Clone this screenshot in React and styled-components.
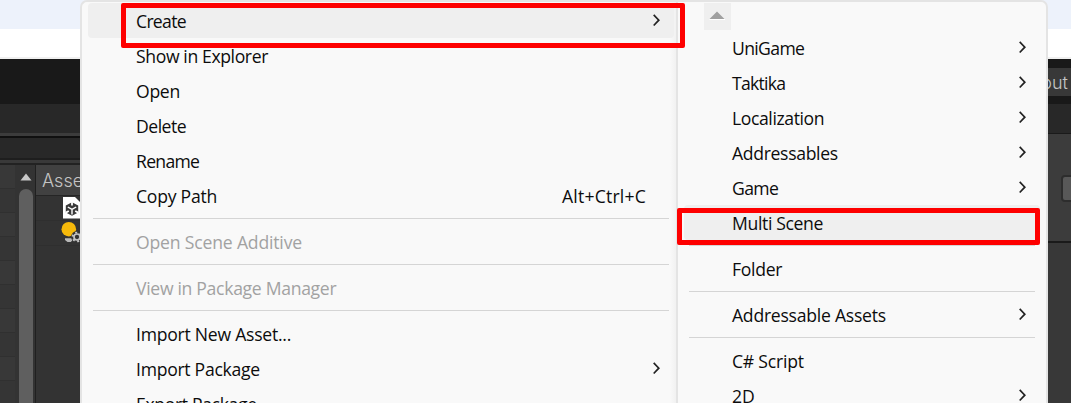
import React from "react";
import styled, { createGlobalStyle } from "styled-components";

const Global = createGlobalStyle`
  * { box-sizing: border-box; }
  body { margin: 0; overflow: hidden; }
`;

const Screen = styled.div`
  position: relative;
  display: flex;
  width: 1071px;
  height: 403px;
  overflow: hidden;
  background: #edf2fb;
  font-family: "Open Sans", "Noto Sans", sans-serif;
`;

/* ---- editor window behind the menus ---- */
const EditorSide = styled.div`
  width: ${(p) => p.$w}px;
  flex: none;
  display: flex;
  flex-direction: column;
  overflow: hidden;
`;
const Band = styled.div`
  flex: none;
  height: ${(p) => p.$h}px;
  background: ${(p) => p.$c};
`;
const Columns = styled.div`
  display: flex;
  flex: 1;
  min-height: 0;
`;
const Tree = styled.div`
  width: 15px;
  background: repeating-linear-gradient(#383838 0 23px, #303030 23px 24px, #353535 24px 47px, #303030 47px 48px);
`;
const Gutter = styled.div`
  width: 20px;
  padding: 8px 0 0 4px;
  background: #333;
  svg { display: block; }
`;
const ScrollThumb = styled.div`
  width: 14px;
  height: 240px;
  margin-top: 8px;
  border-radius: 7px;
  background: #5f5f5f;
`;
const AssetPane = styled.div`
  width: 45px;
  border-left: 1px solid #202020;
  background: #333;
  overflow: hidden;
`;
const AssetHeader = styled.div`
  height: 31px;
  padding-left: 6px;
  border-bottom: 1px solid #252525;
  background: #414141;
  color: #c4c4c4;
  font: 300 18px/31px Inter, sans-serif;
  white-space: nowrap;
`;
const AssetRow = styled.div`
  height: 25px;
  padding-left: 25px;
  border-bottom: 1px solid #2f2f2f;
  svg { display: block; }
`;
const EditorTab = styled.div`
  flex: none;
  height: 28px;
  background: #383838;
  color: #c4c4c4;
  display: flex;
  justify-content: flex-end;
  padding-right: 3px;
  font: 300 18px/29px Inter, sans-serif;
`;
const InspectorTop = styled.div`
  flex: none;
  height: 107px;
  padding: 41px 0 0 13px;
  background: #3c3c3c;
`;
const InspectorButton = styled.div`
  width: 30px;
  height: 27px;
  border: 2px solid #2d2d2d;
  border-radius: 4px;
  background: #585858;
`;

/* ---- menus ---- */
const Menu = styled.div`
  flex: none;
  width: ${(p) => p.$w}px;
  height: 420px;
  padding: 1px ${(p) => p.$right}px 0 6px;
  border: 2px solid #e4e4e4;
  border-right-width: ${(p) => (p.$joined ? 0 : 2)}px;
  border-radius: ${(p) => (p.$joined ? "7px 0 0 0" : "0 7px 0 0")};
  background: ${(p) =>
    p.$joined ? "linear-gradient(to left, #f1f1f1, #f9f9f9 6px)" : "#f9f9f9"};
`;
const Item = styled.div`
  display: flex;
  justify-content: space-between;
  height: 35px;
  padding: 0 ${(p) => p.$end || 14}px 0 48px;
  border-radius: 4px;
  background: ${(p) => (p.$active ? "#efefef" : "transparent")};
  color: ${(p) => (p.$disabled ? "#a2a2a2" : "#0c0c0c")};
  font-size: 17.6px;
  line-height: 37px;
  white-space: nowrap;
  svg { display: block; margin-top: 11px; flex: none; }
`;
const Label = styled.span`
  letter-spacing: ${(p) => p.$ls || 0}px;
`;
const Divider = styled.div`
  height: 1px;
  margin: 5px 5px;
  background: #d5d5d5;
`;
const ScrollUp = styled.div`
  display: flex;
  justify-content: center;
  width: 27px;
  height: 27px;
  margin-left: 20px;
  padding: 8px 2px 0 0;
  background: #efefef;
`;
const Highlight = styled.div`
  position: absolute;
  left: ${(p) => p.$x}px;
  top: ${(p) => p.$y}px;
  width: ${(p) => p.$w}px;
  height: ${(p) => p.$h}px;
  border: 5px solid #fe0000;
  border-radius: 2px;
`;

const Chevron = () => (
  <svg width="7" height="13" viewBox="0 0 7 13" fill="none" stroke="#222" strokeWidth="1.7">
    <path d="M0.7 0.9 L5.8 6.2 L0.7 11.5" />
  </svg>
);

const UnityAsset = () => (
  <svg width="24" height="24" viewBox="0 0 24 24">
    <path d="M2 1h12l6 6v15.5H2z" fill="#fff" />
    <path d="M11 6.3L17.2 9.6v6.8L11 19.8 4.8 16.4V9.6z" fill="#3a3a3a" />
    <path d="M11 6v3.4M4.8 16.6l3-1.6M17.2 16.6l-3-1.6" stroke="#fff" strokeWidth="1.8" />
    <path d="M11 13.4v5M11 13.4L6.8 11M11 13.4l4.2-2.4" stroke="#fff" strokeWidth="1.4" />
  </svg>
);

const BulbAsset = () => (
  <svg width="24" height="24" viewBox="0 0 24 24">
    <circle cx="7.8" cy="8.2" r="7.3" fill="#f6b90a" />
    <path d="M4 17.2h7v2l-1 1.8H6.5L4 19z" fill="#b8b8b8" />
    <circle cx="16" cy="16" r="5.9" fill="#333" />
    <g fill="none" stroke="#c4c4c4">
      <circle cx="16" cy="16" r="3" strokeWidth="1.7" />
      <circle cx="16" cy="16" r="4.4" strokeWidth="1.9" strokeDasharray="2 2.6" />
    </g>
  </svg>
);

const MAIN = [
  { t: "Create", ls: -0.7, sub: true, active: true },
  { t: "Show in Explorer", ls: -0.38 },
  { t: "Open", ls: -0.3 },
  { t: "Delete", ls: -0.5 },
  { t: "Rename", ls: -0.7 },
  { t: "Copy Path", ls: -0.25, key: "Alt+Ctrl+C" },
  null,
  { t: "Open Scene Additive", ls: -0.18, disabled: true },
  null,
  { t: "View in Package Manager", ls: -0.31, disabled: true },
  null,
  { t: "Import New Asset...", ls: -0.25 },
  { t: "Import Package", ls: -0.28, sub: true },
  { t: "Export Package...", ls: -0.35 },
];
const CREATE = [
  { t: "UniGame", ls: -0.65, sub: true },
  { t: "Taktika", ls: -0.75, sub: true },
  { t: "Localization", ls: -0.4, sub: true },
  { t: "Addressables", ls: -0.33, sub: true },
  { t: "Game", ls: -0.6, sub: true },
  { t: "Multi Scene", ls: -0.36, active: true },
  null,
  { t: "Folder", ls: -0.3 },
  null,
  { t: "Addressable Assets", ls: -0.25, sub: true },
  null,
  { t: "C# Script", ls: -0.22 },
  { t: "2D", sub: true },
];

const Items = ({ list }) =>
  list.map((m, i) =>
    m ? (
      <Item key={i} $active={m.active} $disabled={m.disabled} $end={m.key && 28}>
        <Label $ls={m.ls}>{m.t}</Label>
        {m.key && <Label $ls={0.2}>{m.key}</Label>}
        {m.sub && <Chevron />}
      </Item>
    ) : (
      <Divider key={i} />
    )
  );

export default function App() {
  return (
    <Screen>
      <Global />
      <EditorSide $w={80}>
        <Band $h={29} $c="#edf2fb" />
        <Band $h={28} $c="#fff" />
        <Band $h={2} $c="#f0f0f0" />
        <Band $h={45} $c="#191919" />
        <Band $h={29} $c="#282828" />
        <Band $h={3} $c="#3c3c3c" />
        <Band $h={2} $c="#101010" />
        <Band $h={20} $c="#282828" />
        <Band $h={2} $c="#1e1e1e" />
        <Band $h={3} $c="#393939" />
        <Band $h={2} $c="#222" />
        <Columns>
          <Tree />
          <Gutter>
            <svg width="14" height="8" viewBox="0 0 14 8">
              <path d="M1.5 7.5L7 0.5L12.5 7.5z" fill="#c8c8c8" />
            </svg>
            <ScrollThumb />
          </Gutter>
          <AssetPane>
            <AssetHeader>Assets</AssetHeader>
            <AssetRow><UnityAsset /></AssetRow>
            <AssetRow><BulbAsset /></AssetRow>
          </AssetPane>
        </Columns>
      </EditorSide>

      <Menu $w={596} $right={2} $joined>
        <Items list={MAIN} />
      </Menu>
      <Menu $w={372} $right={6}>
        <ScrollUp>
          <svg width="16" height="9" viewBox="0 0 16 9">
            <path d="M0.5 8L8 0.5L15.5 8z" fill="#a0a0a0" />
            <path d="M0.5 8.5h15.5" stroke="#fff" />
          </svg>
        </ScrollUp>
        <Items list={CREATE} />
      </Menu>

      <EditorSide $w={23}>
        <Band $h={29} $c="#edf2fb" />
        <Band $h={28} $c="#fff" />
        <Band $h={2} $c="#f0f0f0" />
        <Band $h={9} $c="#191919" />
        <EditorTab>Layout</EditorTab>
        <Band $h={8} $c="#191919" />
        <Band $h={29} $c="#282828" />
        <Band $h={1} $c="#1a1a1a" />
        <InspectorTop><InspectorButton /></InspectorTop>
        <Band $h={2} $c="#1a1a1a" />
        <Band $h={160} $c="#383838" />
      </EditorSide>

      <Highlight $x={121} $y={3} $w={564} $h={45} />
      <Highlight $x={677} $y={208} $w={363} $h={37} />
    </Screen>
  );
}
